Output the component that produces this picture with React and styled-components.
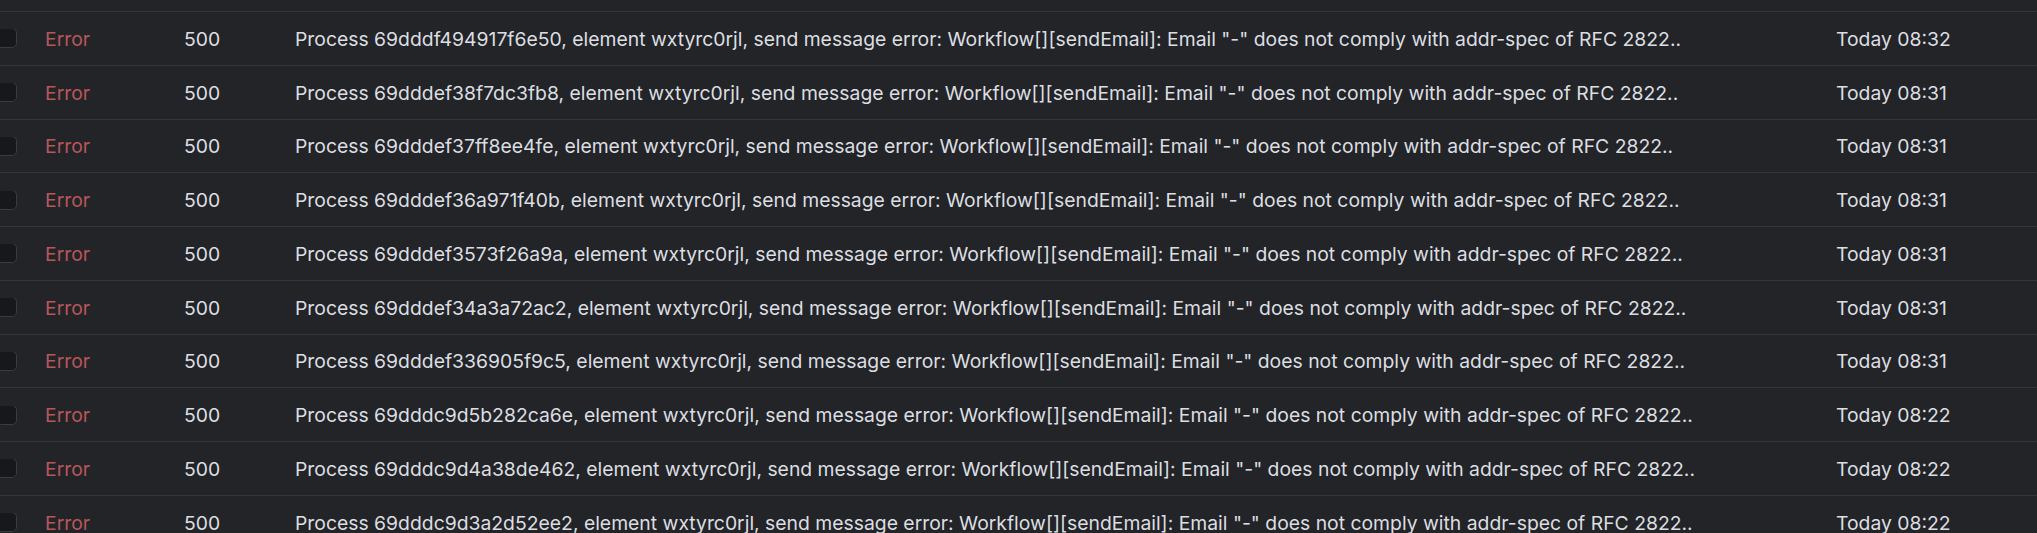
import React from "react";
import styled, { createGlobalStyle } from "styled-components";

const Global = createGlobalStyle`
  html, body { margin: 0; padding: 0; background: #222428; overflow: hidden; }
  body { font-family: Inter, "Noto Sans", "Liberation Sans", sans-serif; }
  *, *::before, *::after { box-sizing: border-box; }
`;

const Table = styled.div`
  width: calc(100% + 3px);
  margin-left: -3px;
  padding-top: 11px;
  display: flex;
  flex-direction: column;
  background: #222428;
`;

const Row = styled.div`
  display: grid;
  grid-template-columns: 48px 139px 111px 1fr 201px;
  align-items: center;
  height: 53.75px;
  flex: none;
  border-top: 1px solid #34363b;
  font-size: 19.35px;
  line-height: 24px;
  padding-top: 1px;
  color: #dcdee1;
  white-space: nowrap;
`;

const Cell = styled.div`
  overflow: hidden;
  color: ${(p) => (p.$tone === "error" ? "#b9565a" : "#dcdee1")};
`;

const Box = styled.span`
  display: block;
  width: 20px;
  height: 20px;
  margin-top: -1px;
  border: 1px solid #3a3c41;
  border-radius: 5px;
  background: #17181b;
`;

const rows = [
  ["69dddf494917f6e50", "08:32"],
  ["69dddef38f7dc3fb8", "08:31"],
  ["69dddef37ff8ee4fe", "08:31"],
  ["69dddef36a971f40b", "08:31"],
  ["69dddef3573f26a9a", "08:31"],
  ["69dddef34a3a72ac2", "08:31"],
  ["69dddef336905f9c5", "08:31"],
  ["69dddc9d5b282ca6e", "08:22"],
  ["69dddc9d4a38de462", "08:22"],
  ["69dddc9d3a2d52ee2", "08:22"],
];

export default function App() {
  return (
    <>
      <Global />
      <Table>
        {rows.map(([id, time]) => (
          <Row key={id}>
            <Cell>
              <Box />
            </Cell>
            <Cell $tone="error">Error</Cell>
            <Cell>500</Cell>
            <Cell>
              {`Process ${id}, element wxtyrc0rjl, send message error: Workflow[][sendEmail]: Email "-" does not comply with addr-spec of RFC 2822..`}
            </Cell>
            <Cell>{`Today ${time}`}</Cell>
          </Row>
        ))}
      </Table>
    </>
  );
}
